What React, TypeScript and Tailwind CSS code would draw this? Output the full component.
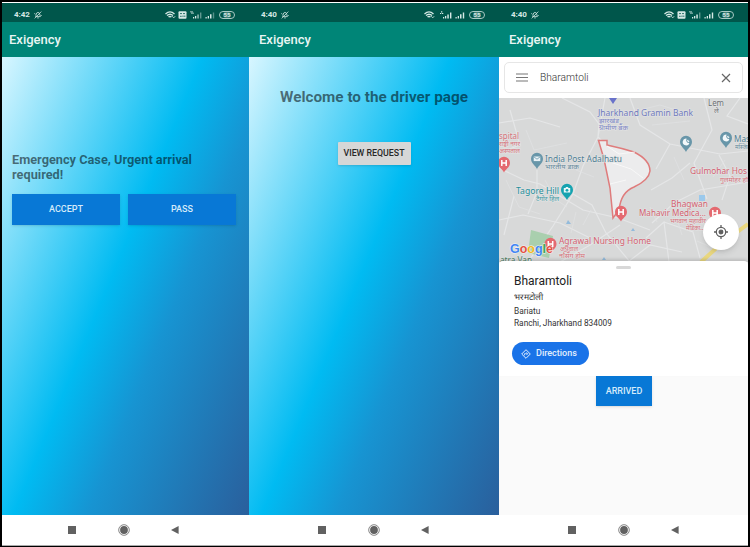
import React from "react";

type Status = { time: string; badge: boolean; strong: boolean };

function StatusBar({ time, badge, strong }: Status) {
  const faint = strong ? 1 : 0.4;
  return (
    <div className="flex h-[19px] shrink-0 items-center justify-between bg-[#00564b] pl-3 pr-[14px] pt-[4px] text-[#d5e8e5]">
      <div className="flex items-center gap-[4px]">
        <span className="w-[16px] whitespace-nowrap text-[8px] font-bold leading-none tracking-[-0.1px]">{time}</span>
        <svg width="8" height="8" viewBox="0 0 8 8" fill="none" stroke="currentColor" strokeWidth="0.8">
          <path d="M1.6 5.6C2.4 4.6 1.7 1.5 4 1.4C6.3 1.5 5.6 4.6 6.4 5.6Z M3.2 6.9H4.8 M7.3 0.6L0.7 7.4 M0.5 2.2L1.2 3.4 M7.5 4L6.9 5" />
        </svg>
      </div>
      <div className="flex items-center">
        <svg width="11" height="8" viewBox="0 0 11 8" fill="none" stroke="currentColor" strokeWidth="1.3">
          <path d="M0.5 3Q5 -1.2 9.5 3M2 4.6Q5 1.8 8 4.6M3.5 6.1Q5 4.8 6.5 6.1" />
          <path d="M7.3 5.2L8.7 6.9L10.2 5.2" strokeWidth="0.8" />
        </svg>
        {badge && (
          <svg className="ml-[2px]" width="9" height="8" viewBox="0 0 9 8">
            <rect x="0.5" y="0.3" width="8" height="7.4" rx="1" fill="currentColor" />
            <path d="M2 2.6H4M5 2.6H7M2 5.3H3.7M5 4.5V6M6.8 4.5V6" stroke="#00564b" strokeWidth="0.8" />
          </svg>
        )}
        <svg className={badge ? "ml-[3px]" : "ml-[5px]"} width="13" height="8" viewBox="0 0 13 8" fill="currentColor">
          {badge && <path d="M0 0.5H3V1.2H0ZM1 1.8H4V2.4H1Z" />}
          {!badge && <path d="M1 0.3H2.3V1.5H1ZM0 2H1.3V3H0ZM2 2H3.3V3H2Z" />}
          <path d="M3 6H4.2V7.5H3ZM5 5H6.3V7.5H5Z" />
          <path d="M7.3 3.5H8.8V7.5H7.3Z" opacity={strong ? 1 : 0.7} />
          <path d="M10 1.5H11.4V7.5H10Z" opacity={badge ? 0.45 : 1} />
        </svg>
        <svg className="ml-[2px]" width="11" height="8" viewBox="0 0 11 8" fill="currentColor">
          <path d="M0.5 6H1.7V7.5H0.5ZM2.7 5H4V7.5H2.7ZM5 3.3H6.5V7.5H5Z" />
          <path d="M7.8 1.5H9.2V7.5H7.8Z" opacity={faint} />
        </svg>
        <div className="ml-[3px] flex h-[8px] w-[16px] items-center justify-center rounded-full border border-[#a9c9c4] text-[6px] font-bold leading-none">
          <span className="rounded-sm bg-[#86aaa5]/50 px-[1px]">55</span>
        </div>
      </div>
    </div>
  );
}

function NavBar({ shift }: { shift: string }) {
  return (
    <div className={`flex h-[30px] shrink-0 items-center bg-white text-[#616161] ${shift}`}>
      <div className="h-[8px] w-[8px] bg-[#616161]" />
      <svg className="ml-[42px]" width="12" height="12" viewBox="0 0 12 12">
        <circle cx="6" cy="6" r="5.3" fill="none" stroke="#777" strokeWidth="0.9" />
        <circle cx="6" cy="6" r="3.9" fill="#616161" />
      </svg>
      <svg className="ml-[41px]" width="8" height="8" viewBox="0 0 8 8">
        <path d="M0 4L7.6 0V8Z" fill="#616161" />
      </svg>
    </div>
  );
}

function Phone({ status, className, nav, titlePad, children }: {
  status: Status; className: string; nav: string; titlePad: string; children: React.ReactNode;
}) {
  return (
    <section className={`flex flex-col ${className}`}>
      <StatusBar {...status} />
      <header className={`flex h-[35px] shrink-0 items-center bg-[#008577] pt-px text-[13px] font-medium text-[#e9f6f4] ${titlePad}`}>
        Exigency
      </header>
      {children}
      <NavBar shift={nav} />
    </section>
  );
}

const sky =
  "bg-[linear-gradient(112.5deg,#d8f6ff_0%,#00bbf2_46%,#1794d2_63%,#2a5f9c_100%)]";

function HospitalPin({ x, y }: { x: number; y: number }) {
  return (
    <g transform={`translate(${x} ${y})`}>
      <path d="M0 9.5C-1 6.5-6 4.5-6-0.3A6 6 0 0 1 6-0.3C6 4.5 1 6.5 0 9.5Z" fill="#e46a70" />
      <path d="M-2.2-3V3M2.2-3V3M-2.2 0H2.2" stroke="#fff" strokeWidth="1.5" />
    </g>
  );
}

function PlacePin({ x, y, kind }: { x: number; y: number; kind: "moon" | "mail" | "camera" }) {
  return (
    <g transform={`translate(${x} ${y})`}>
      <path d="M0 10C-1 6.8-6 4.6-6-0.3A6 6 0 0 1 6-0.3C6 4.6 1 6.8 0 10Z" fill={kind === "camera" ? "#16a3b0" : "#6896a9"} />
      {kind === "moon" && <path d="M0.7-3.3A3.4 3.4 0 1 0 3.4 0.9A2.7 2.7 0 0 1 0.7-3.3ZM2-2.4L2.6-1.2L3.8-1L2.8-0.2L2.3 0.5L1.8-0.4L0.8-1Z" fill="#f3f8fa" />}
      {kind === "mail" && <><rect x="-3.3" y="-2.5" width="6.6" height="4.6" fill="#e9f2f6" /><path d="M-3.3-2.3L0 0.2L3.3-2.3" fill="none" stroke="#6896a9" strokeWidth="0.8" /></>}
      {kind === "camera" && <><path d="M-3.2-2H-1.6L-0.9-3H0.9L1.6-2H3.2V2.6H-3.2Z" fill="#e9f8f9" /><circle cx="0" cy="0.3" r="1.4" fill="#16a3b0" /></>}
    </g>
  );
}

type Label = [string, number, number, number, string, number?];
const labels: Label[] = [
  ["Jharkhand Gramin Bank", 598, 115.5, 9, "#6f79bd", 95],
  ["झारखंड", 599, 123, 6.5, "#7f88c4", 20],
  ["ग्रामीण बैंक", 599, 130, 6.5, "#7f88c4", 29],
  ["Lem", 708, 106, 8.5, "#6b6f72", 16],
  ["ले", 714, 113, 7, "#6b6f72"],
  ["spital", 499, 139, 9, "#d6727c", 20],
  ["राष्ट्री नगर", 499, 146, 6.5, "#d6727c", 21],
  ["अस्पताल", 499, 153, 6.5, "#d6727c", 21],
  ["India Post Adalhatu", 545, 161.5, 9, "#527f94", 77],
  ["भारतीय डाक", 545, 169, 6.5, "#66899b", 34],
  ["Mas", 734, 141.5, 9, "#527f94", 16],
  ["मस्जिद", 735, 149, 6.5, "#66899b", 15],
  ["Gulmohar Hos", 690, 174, 9, "#d45f70", 57],
  ["गुलमोहर हॉ", 720, 182, 6.5, "#d6727c", 28],
  ["Tagore Hill", 516, 194, 9, "#248d9a", 43],
  ["टैगोर हिल", 536, 201, 6.5, "#3d98a3", 23],
  ["Bhagwan", 671, 207, 9, "#d45f70", 37],
  ["Mahavir Medica...", 639, 216, 9, "#d45f70", 67],
  ["भगवान महावीर", 670, 223, 6.5, "#d6727c", 36],
  ["मेडिका...", 686, 230, 6.5, "#d6727c", 19],
  ["Agrawal Nursing Home", 559, 243.5, 9, "#d45f70", 92],
  ["अग्रवाल", 560, 250.5, 6.5, "#d6727c", 18],
  ["नर्सिंग होम", 559, 257.5, 6.5, "#d6727c", 26],
  ["atra Van", 500, 263, 8.5, "#4e7f64", 32],
];

function CityMap() {
  return (
    <svg className="block h-[164px] w-[249px]" viewBox="499 98 249 164">
      <rect x="499" y="98" width="249" height="164" fill="#d8d9d9" />
      <g fill="none" stroke="#e5e6e7" strokeWidth="1.2">
        <path d="M605 98L598 137L583 166L573 194L553 226L528 262M562 98L590 112L599 124L598 137L606 145M499 123L530 118L560 127M499 168L524 180L540 184L583 210L618 218L650 230" />
        <path d="M537 170V192L528 214M499 220L523 215L560 223L590 238M514 196L504 235M573 194L592 205L606 233L630 262M630 98L640 125L670 144L720 154L748 151M670 144L656 169M704 98L712 130L694 163L707 199M651 190L672 178L690 163M652 223L674 203L700 190L748 182" />
        <path d="M646 238L664 222L669 262M664 222L693 232L700 258M560 262L590 245L620 225M628 262L650 245L682 252M719 155L730 176L722 200M740 98L727 116L748 124M510 110L520 145L499 153" />
      </g>
      <g fill="none" stroke="#e0e1e2" strokeWidth="0.8">
        <path d="M506 180L519 207L540 214M545 180L555 199L567 207M576 212L571 233M591 210L583 225M640 110L660 105L682 112M652 125L690 121M674 157L684 180M725 160L713 177M650 207L657 222M674 210L682 235M697 241L718 250M526 130L534 150L567 143M576 170L594 177" />
      </g>
      <path d="M531 230L553 236L549 258L528 253Z" fill="#a9cfae" />
      <path d="M701 262L722 243L748 224" fill="none" stroke="#e9d77f" strokeWidth="4" />
      <rect x="699" y="195" width="6" height="6" fill="#9bc9ec" />
      <path d="M566 224L568 220L571 224ZM631 231L633 228L635 231ZM602 260L604 257L606 260Z" fill="#93bbdc" />
      <path d="M598.5 140.5H607V145Q621 148 634 152Q650 160 650 171Q649 180 634 187Q621 192 619 210L613 218L610 188L604 159Z" fill="#ececed" stroke="#df7c7c" strokeWidth="1.5" />
      <path d="M607 146L619 154L635 152M604 160L631 169L643 178M610 184L626 180" fill="none" stroke="#f8f8f8" />
      <path d="M609 98H617L613 104Z" fill="#6972ca" />
      <PlacePin x={537} y={159} kind="mail" />
      <PlacePin x={567} y={190} kind="camera" />
      <PlacePin x={686} y={142} kind="moon" />
      <PlacePin x={726} y={138} kind="moon" />
      <HospitalPin x={504} y={163} />
      <HospitalPin x={621} y={212} />
      <HospitalPin x={715} y={213} />
      <g className="font-['Noto_Sans','Noto_Sans_Devanagari',sans-serif]" stroke="#e3e4e4" strokeWidth="1.2" paintOrder="stroke">
        {labels.map(([text, x, y, size, fill, len]) => (
          <text key={text} x={x} y={y} fontSize={size} fill={fill} textLength={len} lengthAdjust="spacingAndGlyphs">{text}</text>
        ))}
      </g>
      <HospitalPin x={550.5} y={244} />
      <text x="510" y="253" fontSize="13.5" className="font-['Liberation_Sans',sans-serif] font-bold" stroke="#f5f5f5" strokeWidth="1" paintOrder="stroke" textLength="43" lengthAdjust="spacingAndGlyphs">
        <tspan fill="#4285f4">G</tspan><tspan fill="#e45044">o</tspan><tspan fill="#f1b824">o</tspan><tspan fill="#4285f4">g</tspan><tspan fill="#3ba65a">l</tspan><tspan fill="#e45044">e</tspan>
      </text>
    </svg>
  );
}

export default function App() {
  return (
    <main className="h-[547px] w-[750px] overflow-hidden bg-black px-[2px] pt-[2px] font-['Roboto',sans-serif]">
      <div className="flex h-[544px] border-b border-t border-b-[#aaa] border-t-white bg-white">
        <Phone status={{ time: "4:42", badge: true, strong: false }} className="w-[247px]" nav="pl-[66px]" titlePad="pl-[7px]">
          <div className={`flex-1 pl-[10px] pr-[11px] pt-[95px] ${sky}`}>
            <h1 className="whitespace-nowrap text-[12.75px] font-bold leading-[15px] text-black/55">Emergency Case, Urgent arrival<br />required!</h1>
            <div className="mt-[12px] flex gap-[8px] text-[9px] font-medium text-[#d5ebfa]">
              <button className="h-[31px] w-[108px] bg-[#0878d6] pt-px shadow-sm">ACCEPT</button>
              <button className="h-[31px] w-[108px] shrink-0 bg-[#0878d6] pt-px shadow-sm">PASS</button>
            </div>
          </div>
        </Phone>
        <Phone status={{ time: "4:40", badge: false, strong: true }} className="w-[250px]" nav="pl-[69px]" titlePad="pl-[10px]">
          <div className={`flex flex-1 flex-col items-center pt-[31px] ${sky}`}>
            <h1 className="whitespace-nowrap text-[15.3px] font-bold leading-[18px] text-black/55">Welcome to the driver page</h1>
            <button className="mt-[36px] h-[23px] w-[73px] whitespace-nowrap rounded-[1px] bg-[#d6d7d7] pt-px text-[8.8px] font-medium text-[#282828] shadow-sm">VIEW REQUEST</button>
          </div>
        </Phone>
        <Phone status={{ time: "4:40", badge: true, strong: true }} className="w-[249px]" nav="pl-[69px]" titlePad="pl-[10px]">
          <div className="flex flex-1 flex-col bg-[#fafafa]">
            <div className="h-[41px] bg-white px-[5px] pt-[5px]">
              <div className="flex h-[31px] items-center rounded-[5px] border border-[#e6e6e6] pl-[11px] pr-[11px] text-[10.2px] text-[#666]">
                <svg width="12" height="9" viewBox="0 0 12 9"><path d="M0 1H12M0 4.5H12M0 8H12" stroke="#777" strokeWidth="1.2" /></svg>
                <span className="ml-[12px] flex-1 font-light text-[#333]">Bharamtoli</span>
                <svg width="10" height="10" viewBox="0 0 10 10"><path d="M1 1L9 9M9 1L1 9" stroke="#666" strokeWidth="1.2" /></svg>
              </div>
            </div>
            <div className="relative h-[163px]">
              <CityMap />
              <button aria-label="My location" className="absolute right-[9px] top-[116px] flex h-[36px] w-[36px] items-center justify-center rounded-full bg-white shadow-md">
                <svg width="14" height="14" viewBox="0 0 14 14" fill="none" stroke="#606060" strokeWidth="1.3">
                  <circle cx="7" cy="7" r="4.7" /><circle cx="7" cy="7" r="1.8" fill="#606060" />
                  <path d="M7 0V2.3M7 11.7V14M0 7H2.3M11.7 7H14" />
                </svg>
              </button>
            </div>
            <div className="relative flex h-[115px] flex-col rounded-t-[4px] bg-white pl-[15px] pt-[5px] text-[#333] shadow-[0_-2px_3px_rgba(0,0,0,0.12)]">
              <div className="ml-[102px] h-[3px] w-[15px] rounded-sm bg-[#d8d8d8]" />
              <h2 className="mt-[5px] text-[12px] leading-[15px] text-[#222]">Bharamtoli</h2>
              <p className="mt-[3px] whitespace-nowrap text-[8.6px] leading-[10px]">भरमटोली</p>
              <p className="mt-[4px] text-[8.3px] leading-[10px]">Bariatu</p>
              <p className="mt-[2px] text-[8.3px] leading-[10px]">Ranchi, Jharkhand 834009</p>
              <button className="-ml-[2px] mt-[14px] flex h-[23px] w-[77px] shrink-0 items-center rounded-full bg-[#1a73e8] pl-[9px] text-[9px] font-medium text-[#e2eefd]">
                <svg width="10" height="10" viewBox="0 0 10 10" fill="none" stroke="currentColor">
                  <path d="M5 0.7L9.3 5L5 9.3L0.7 5Z" strokeLinejoin="round" /><path d="M3.5 6.3V4.7H6.5M5.5 3.4L6.8 4.7L5.5 6" strokeWidth="0.8" />
                </svg>
                <span className="ml-[5px]">Directions</span>
              </button>
            </div>
            <button className="ml-[97px] h-[30px] w-[56px] bg-[#0878d6] pt-px text-[9px] font-medium text-[#d5ebfa] shadow-sm">ARRIVED</button>
          </div>
        </Phone>
      </div>
    </main>
  );
}
